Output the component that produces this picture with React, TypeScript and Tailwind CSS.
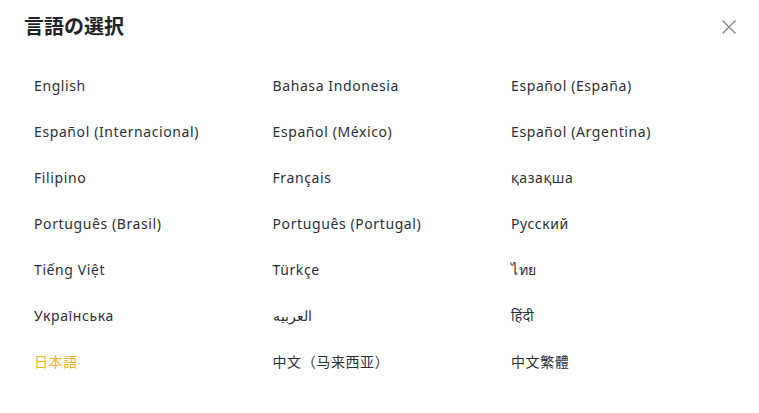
import { FC } from "react";

const languages = [
  "English",
  "Bahasa Indonesia",
  "Español (España)",
  "Español (Internacional)",
  "Español (México)",
  "Español (Argentina)",
  "Filipino",
  "Français",
  "қазақша",
  "Português (Brasil)",
  "Português (Portugal)",
  "Русский",
  "Tiếng Việt",
  "Türkçe",
  "ไทย",
  "Українська",
  "العربيه",
  "हिंदी",
  "日本語",
  "中文（马来西亚）",
  "中文繁體",
];

const active = "日本語";

const CloseIcon: FC = () => (
  <svg width="16" height="16" viewBox="0 0 16 16" fill="none">
    <path d="M1.5 1.5L14.5 14.5M14.5 1.5L1.5 14.5" stroke="#8a8d91" strokeWidth="1.5" />
  </svg>
);

export default function App() {
  return (
    <div
      className="w-[759px] h-[413px] bg-white overflow-hidden"
      style={{ fontFamily: '"Noto Sans", "Noto Sans CJK JP", sans-serif' }}
    >
      <div className="h-[54px] pl-6 pr-[22px] flex items-center justify-between">
        <h2 className="text-[20px] font-bold text-[#1e2329] leading-none">言語の選択</h2>
        <button className="w-4 h-4 flex items-center justify-center">
          <CloseIcon />
        </button>
      </div>
      <ul className="mt-[8px] ml-6 grid grid-cols-[repeat(3,238.5px)]">
        {languages.map((lang) => (
          <li
            key={lang}
            className={`h-[46px] px-[10px] flex items-center text-[14px] tracking-[0.6px] ${
              lang === active ? "text-[#f5b12a]" : "text-[#2b2f36]"
            }`}
          >
            {lang}
          </li>
        ))}
      </ul>
    </div>
  );
}
